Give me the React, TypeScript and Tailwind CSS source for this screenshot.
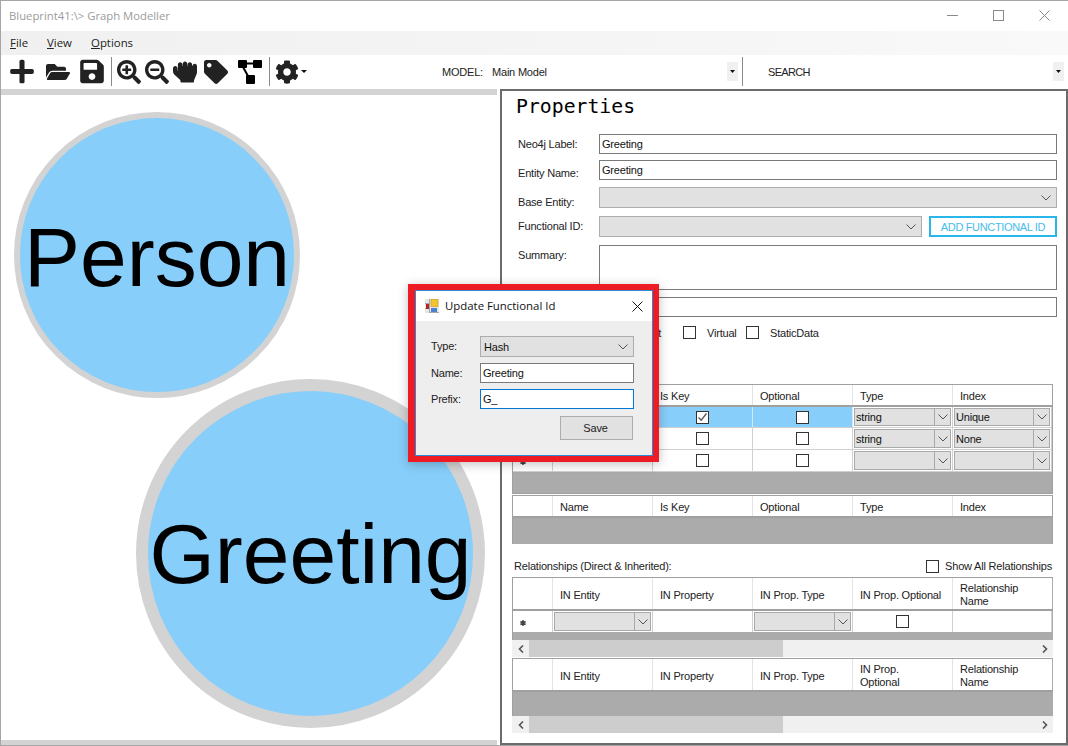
import React from "react";
import { FaPlus, FaFolderOpen, FaSave, FaSearchPlus, FaSearchMinus, FaHandRock, FaTag, FaCog } from "react-icons/fa";

const Chevron = ({ className = "" }: { className?: string }) => (
  <svg width="10" height="6" viewBox="0 0 10 6" className={className} fill="none" stroke="#555" strokeWidth="1">
    <path d="M0.5 0.5 L5 5 L9.5 0.5" />
  </svg>
);

const Box = ({ checked = false }: { checked?: boolean }) => (
  <span className="w-[13px] h-[13px] shrink-0 border border-[#333] bg-white flex items-center justify-center">
    {checked && (
      <svg width="11" height="11" viewBox="0 0 11 11" fill="none" stroke="#555" strokeWidth="1.3">
        <path d="M1.5 5.5 L4.2 8.2 L9.5 1.5" />
      </svg>
    )}
  </span>
);

const Star = () => (
  <span className="mr-[19px] mt-[2px] flex">
    <svg width="6" height="6" viewBox="0 0 6 6" stroke="#444" strokeWidth="1.5">
      <path d="M3 0 V6 M0.4 1.5 L5.6 4.5 M0.4 4.5 L5.6 1.5" />
    </svg>
  </span>
);

const Input = ({ value = "", h = "h-[20px]", className = "" }: { value?: string; h?: string; className?: string }) => (
  <div className={`flex-1 ${h} border border-[#7a7a7a] bg-white pl-[2px] flex items-center text-[#111] ${className}`}>{value}</div>
);

const Combo = ({ value = "", className = "" }: { value?: string; className?: string }) => (
  <div className={`h-[21px] border border-[#adadad] bg-[#e1e1e1] flex items-center pl-[3px] pr-[5px] text-[#111] ${className}`}>
    <span className="flex-1">{value}</span>
    <Chevron />
  </div>
);

const Label = ({ text, pad }: { text: string; pad: string }) => (
  <div className={`w-[81px] h-full leading-[14px] text-[#222] shrink-0 ${pad}`}>{text}</div>
);

const Head = ({ children, last = false, pad = "pt-[2px]" }: { children?: React.ReactNode; last?: boolean; pad?: string }) => (
  <div className={`h-full pl-[7px] pr-[2px] flex items-center leading-[13px] text-[#222] bg-white ${pad} ${last ? "" : "border-r border-[#e3e3e3]"}`}>
    {children}
  </div>
);

const GridCombo = ({ value = "" }: { value?: string }) => (
  <div className="h-full bg-white border-r border-[#d0d0d0] p-px">
    <div className="h-full border border-[#a9a9a9] bg-[#e1e1e1] flex items-center text-[#111]">
      <span className="flex-1 pl-px">{value}</span>
      <span className="w-[16px] h-full border-l border-[#a9a9a9] flex items-center justify-center">
        <Chevron />
      </span>
    </div>
  </div>
);

const CheckCell = ({ checked = false, blue = false }: { checked?: boolean; blue?: boolean }) => (
  <div className={`h-full border-r flex items-center justify-center ${blue ? "bg-[#87cefa] border-[#cfe9fa]" : "bg-white border-[#d0d0d0]"}`}>
    <Box checked={checked} />
  </div>
);

const Plain = ({ blue = false, children }: { blue?: boolean; children?: React.ReactNode }) => (
  <div className={`h-full border-r flex items-center justify-center ${blue ? "bg-[#87cefa] border-[#cfe9fa]" : "bg-white border-[#d0d0d0]"}`}>{children}</div>
);

const Row = ({ h, children }: { h: string; children: React.ReactNode }) => (
  <div className={`grid grid-cols-[40px_100px_100px_100px_100px_99px] border-b border-[#d0d0d0] ${h}`}>{children}</div>
);

const FieldHeader = () => (
  <div className="grid grid-cols-[40px_100px_100px_100px_100px_99px] h-[20px] border-b-2 border-[#a0a0a0] box-content">
    <Head />
    <Head>Name</Head>
    <Head>Is Key</Head>
    <Head>Optional</Head>
    <Head>Type</Head>
    <Head last>Index</Head>
  </div>
);

const RelHeader = ({ split = false }: { split?: boolean }) => (
  <div className="grid grid-cols-[40px_100px_100px_100px_100px_99px] h-[31px] border-b-2 border-[#a0a0a0] box-content">
    <Head />
    <Head pad="pt-[4px]">IN Entity</Head>
    <Head pad="pt-[4px]">IN Property</Head>
    <Head pad="pt-[4px]">IN Prop. Type</Head>
    <Head>{split ? <span>IN Prop.<br />Optional</span> : <span className="mt-[2px]">IN Prop. Optional</span>}</Head>
    <Head last><span>Relationship<br />Name</span></Head>
  </div>
);

const ScrollBar = () => (
  <div className="w-[541px] ml-[10px] h-[17px] bg-[#f0f0f0] flex items-center shrink-0">
    <span className="w-[17px] flex justify-center">
      <svg width="6" height="8" viewBox="0 0 6 8" fill="none" stroke="#555" strokeWidth="1.6"><path d="M5 0.5 L1.5 4 L5 7.5" /></svg>
    </span>
    <span className="w-[254px] h-full bg-[#cdcdcd]" />
    <span className="flex-1" />
    <span className="w-[17px] flex justify-center">
      <svg width="6" height="8" viewBox="0 0 6 8" fill="none" stroke="#555" strokeWidth="1.6"><path d="M1 0.5 L4.5 4 L1 7.5" /></svg>
    </span>
  </div>
);

const Sep = ({ className }: { className: string }) => <span className={`w-px h-[29px] bg-[#8a8a8a] shrink-0 ${className}`} />;

const Drop = () => (
  <span className="w-[11px] h-[19px] bg-[#f0f0f0] flex items-center justify-center shrink-0">
    <svg width="5" height="3" viewBox="0 0 5 3"><path d="M0 0 H5 L2.5 3 Z" fill="#111" /></svg>
  </span>
);

const DiagramIcon = () => (
  <svg width="24" height="24" viewBox="0 0 24 24" className="ml-[10px] shrink-0">
    <rect x="0" y="0" width="9" height="8" rx="1" fill="#000" />
    <rect x="15" y="0" width="9" height="8" rx="1" fill="#000" />
    <rect x="8" y="15" width="9" height="9" rx="1" fill="#000" />
    <path d="M8 3.5 H16 M5 7 L10 16" stroke="#000" strokeWidth="2" fill="none" />
  </svg>
);

const AppIcon = () => (
  <svg width="14" height="14" viewBox="0 0 14 14" className="shrink-0">
    <rect x="0" y="0" width="14" height="14" fill="#e6e6e6" />
    <path d="M0 4.5 H5 M0 9.5 H5 M4.5 0 V14 M9.5 9 V14 M4.5 13.5 H14" stroke="#a8a8a8" strokeWidth="1" />
    <rect x="1" y="5" width="3" height="5" fill="#b3261e" />
    <rect x="6" y="0.5" width="7" height="7" fill="#f4c430" stroke="#c99a10" strokeWidth="0.6" />
    <rect x="6" y="9" width="6" height="4" fill="#4a80d0" />
  </svg>
);

export default function App() {
  return (
    <div
      className="relative w-[1068px] h-[746px] overflow-hidden bg-white border-t border-l border-b border-[#a6a6a6] flex flex-col text-[11px] leading-[14px] tracking-[-0.2px]"
      style={{ fontFamily: '"Liberation Sans", Arial, sans-serif' }}
    >
      {/* title bar */}
      <div className="h-[30px] shrink-0 flex items-center pl-[8px] text-[#9b9b9b] font-['Open_Sans',sans-serif] tracking-[0px] text-[11.3px]">
        <span className="flex-1">Blueprint41:\&gt; Graph Modeller</span>
        <div className="flex items-center pr-px pb-[2px]">
          <span className="w-[46px] flex items-center justify-center">
            <svg width="11" height="11" viewBox="0 0 11 11" stroke="#8a8a8a" fill="none"><path d="M0 5.5 H11" /></svg>
          </span>
          <span className="w-[46px] flex items-center justify-center">
            <svg width="11" height="11" viewBox="0 0 11 11" stroke="#8a8a8a" fill="none"><rect x="0.5" y="0.5" width="10" height="10" /></svg>
          </span>
          <span className="w-[46px] flex items-center justify-center">
            <svg width="11" height="11" viewBox="0 0 11 11" stroke="#8a8a8a" fill="none"><path d="M0.5 0.5 L10.5 10.5 M10.5 0.5 L0.5 10.5" /></svg>
          </span>
        </div>
      </div>

      {/* menu */}
      <div className="h-[24px] shrink-0 flex items-center pl-[9px] bg-gradient-to-r from-[#f0f0f0] to-[#f9f9f9] text-[#222] font-['Open_Sans',sans-serif] tracking-[0px] text-[11.4px]">
        <span className="w-[37px]"><u>F</u>ile</span>
        <span className="w-[44px]"><u>V</u>iew</span>
        <span><u>O</u>ptions</span>
      </div>

      {/* toolbar */}
      <div className="h-[33px] shrink-0 flex items-center pl-[9px] text-[#222]">
        <FaPlus size={27} className="w-[24px] shrink-0" />
        <FaFolderOpen size={24} className="ml-[12px] shrink-0" />
        <FaSave size={27} className="ml-[10px] w-[24px] shrink-0" />
        <Sep className="ml-[7px]" />
        <FaSearchPlus size={24} className="ml-[5px] shrink-0" />
        <FaSearchMinus size={24} className="ml-[4px] shrink-0" />
        <FaHandRock size={24} className="ml-[4px] shrink-0" />
        <FaTag size={24} className="ml-[7px] shrink-0" />
        <DiagramIcon />
        <Sep className="ml-[7px]" />
        <FaCog size={24} className="ml-[5px] shrink-0" />
        <svg width="6" height="3" viewBox="0 0 6 3" className="ml-[2px] shrink-0"><path d="M0 0 H6 L3 3 Z" fill="#111" /></svg>
        <div className="ml-[135px] w-[285px] flex items-center shrink-0">
          <span className="w-[50px]">MODEL:</span>
          <span>Main Model</span>
        </div>
        <Drop />
        <Sep className="ml-[4px]" />
        <span className="ml-[25px] w-[285px] shrink-0 tracking-[-0.7px]">SEARCH</span>
        <Drop />
      </div>

      {/* body */}
      <div className="flex-1 flex min-h-0">
        {/* canvas */}
        <div className="w-[499px] shrink-0 flex flex-col pt-px">
          <div className="h-[6px] w-[496px] bg-[#d3d3d3] shrink-0" />
          <div className="relative flex-1 overflow-hidden">
            <div className="absolute left-[13px] top-[17px] w-[286px] h-[286px] rounded-full bg-[#87cefa] border-[6px] border-[#d3d3d3] flex items-center justify-center text-[84px] leading-none text-black tracking-[0px] box-border">
              <span className="mt-[3px]">Person</span>
            </div>
            <div className="absolute left-[135px] top-[284px] w-[349px] h-[349px] rounded-full bg-[#87cefa] border-[12px] border-[#d3d3d3] flex items-center justify-center text-[84px] leading-none text-black tracking-[0px] box-border">
              <span>Greeting</span>
            </div>
          </div>
          <div className="h-[5px] w-[496px] bg-[#d3d3d3] shrink-0" />
        </div>

        {/* properties */}
        <div className="flex-1 mt-px border-2 border-[#6b6b6b] flex flex-col min-w-0 overflow-hidden">
          <div className="h-[43px] shrink-0 pl-[14px] pt-[3px] text-[20px] leading-[24px] text-black tracking-[0px] font-['DejaVu_Sans_Mono',monospace]">
            <span className="text-[19.8px]">Properties</span>
          </div>
          <div className="flex flex-col pl-[16px] pr-[9px] shrink-0">
            <div className="flex h-[20px]">
              <Label text="Neo4j Label:" pad="pt-[3px]" />
              <Input value="Greeting" />
            </div>
            <div className="flex h-[20px] mt-[6px]">
              <Label text="Entity Name:" pad="pt-[6px]" />
              <Input value="Greeting" />
            </div>
            <div className="flex h-[21px] mt-[7px]">
              <Label text="Base Entity:" pad="pt-[8px]" />
              <Combo className="flex-1" />
            </div>
            <div className="flex h-[21px] mt-[8px]">
              <Label text="Functional ID:" pad="pt-[3px]" />
              <Combo className="w-[323px]" />
              <div className="ml-[7px] flex-1 border-2 border-[#29b6e8] flex items-center justify-center text-[#45bdea] tracking-[-0.35px]">ADD FUNCTIONAL ID</div>
            </div>
            <div className="flex h-[45px] mt-[8px]">
              <Label text="Summary:" pad="pt-[3px]" />
              <Input h="h-[45px]" />
            </div>
            <div className="flex h-[20px] mt-[7px]">
              <Label text="" pad="" />
              <Input />
            </div>
            <div className="flex h-[13px] mt-[9px] items-center text-[#222]">
              <span className="w-[143px] text-right">Abstract</span>
              <span className="ml-[22px]"><Box /></span>
              <span className="ml-[11px] w-[39px]">Virtual</span>
              <Box />
              <span className="ml-[11px]">StaticData</span>
            </div>
          </div>

          {/* fields table */}
          <div className="w-[541px] ml-[10px] mt-[45px] h-[110px] shrink-0 border border-[#a0a0a0] bg-[#ababab]">
            <FieldHeader />
            <Row h="h-[21px]">
              <Plain blue />
              <Plain blue />
              <CheckCell blue checked />
              <CheckCell blue />
              <GridCombo value="string" />
              <GridCombo value="Unique" />
            </Row>
            <Row h="h-[22px]">
              <Plain />
              <Plain />
              <CheckCell />
              <CheckCell />
              <GridCombo value="string" />
              <GridCombo value="None" />
            </Row>
            <Row h="h-[22px]">
              <Plain><Star /></Plain>
              <Plain />
              <CheckCell />
              <CheckCell />
              <GridCombo />
              <GridCombo />
            </Row>
          </div>
          <div className="w-[541px] ml-[10px] mt-px h-[49px] shrink-0 border border-[#a0a0a0] border-b-0 bg-[#ababab]">
            <FieldHeader />
          </div>

          {/* relationships */}
          <div className="flex items-center justify-between pl-[12px] pr-[14px] h-[18px] mt-[13px] shrink-0 text-[#222]">
            <span>Relationships (Direct &amp; Inherited):</span>
            <span className="flex items-center">
              <Box />
              <span className="ml-[6px]">Show All Relationships</span>
            </span>
          </div>
          <div className="w-[541px] ml-[10px] mt-[2px] h-[63px] shrink-0 border-t border-l border-[#a0a0a0] bg-[#ababab]">
            <RelHeader />
            <div className="grid grid-cols-[40px_100px_100px_100px_100px_99px] h-[21px]">
              <Plain><Star /></Plain>
              <GridCombo />
              <Plain />
              <GridCombo />
              <CheckCell />
              <Plain />
            </div>
          </div>
          <ScrollBar />
          <div className="w-[541px] ml-[10px] mt-px h-[58px] shrink-0 border-t border-l border-[#a0a0a0] bg-[#ababab]">
            <RelHeader split />
          </div>
          <ScrollBar />
        </div>
      </div>

      {/* dialog */}
      <div className="absolute left-[407px] top-[283px] w-[251px] h-[178px] border-[6px] border-l-[7px] border-[#ed1c24] shadow-[0_2px_10px_rgba(0,0,0,0.25)] flex flex-col">
        <div className="flex-1 border border-[#2a8ad4] flex flex-col bg-[#eeeeee] min-h-0">
          <div className="h-[30px] shrink-0 bg-white flex items-center pl-[9px] text-[#111] font-['Open_Sans',sans-serif] tracking-[0px] text-[11.4px]">
            <AppIcon />
            <span className="ml-[6px] flex-1">Update Functional Id</span>
            <svg width="11" height="11" viewBox="0 0 11 11" stroke="#111" fill="none" className="mr-[9px]"><path d="M0.5 0.5 L10.5 10.5 M10.5 0.5 L0.5 10.5" /></svg>
          </div>
          <div className="flex flex-col pl-[15px] pt-[15px]">
            <div className="flex items-center h-[21px]">
              <span className="w-[49px] text-[#222] mb-px">Type:</span>
              <Combo value="Hash" className="w-[154px]" />
            </div>
            <div className="flex items-center h-[20px] mt-[6px]">
              <span className="w-[49px] text-[#222]">Name:</span>
              <div className="w-[154px] h-[20px] flex"><Input value="Greeting" /></div>
            </div>
            <div className="flex items-center h-[20px] mt-[6px]">
              <span className="w-[49px] text-[#222]">Prefix:</span>
              <div className="w-[154px] h-[20px] flex"><Input value="G_" className="border-[#0078d7]" /></div>
            </div>
            <div className="ml-[129px] mt-[7px] w-[73px] h-[24px] bg-[#e1e1e1] border border-[#adadad] flex items-center justify-center text-[#222] pr-[2px]">Save</div>
          </div>
        </div>
      </div>
    </div>
  );
}
